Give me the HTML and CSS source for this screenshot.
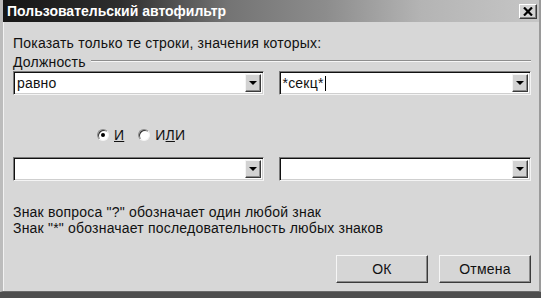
FILE: index.html
```html
<!DOCTYPE html>
<html lang="ru">
<head>
    <meta charset="UTF-8">
    <title>Пользовательский автофильтр</title>
    <link rel="stylesheet" href="styles.css">
</head>
<body>
    <div class="window">
        <div class="titlebar">
            <span class="title">Пользовательский автофильтр</span>
            <div class="close-btn">
                <svg width="10" height="9" viewBox="0 0 10 9">
                    <path d="M1 0.5 L9 8.5 M9 0.5 L1 8.5" stroke="#000" stroke-width="2.2"/>
                </svg>
            </div>
        </div>
        <div class="content">
            <div class="caption">Показать только те строки, значения которых:</div>
            <div class="group">
                <span>Должность</span>
                <div class="etched"></div>
            </div>
            <div class="combo-row">
                <div class="combo left">
                    <span class="value">равно</span>
                    <div class="drop"><i></i></div>
                </div>
                <div class="combo right">
                    <span class="value">*секц*<b class="caret"></b></span>
                    <div class="drop"><i></i></div>
                </div>
            </div>
            <div class="radios">
                <label class="radio"><span class="dot checked"></span><span><u>И</u></span></label>
                <label class="radio"><span class="dot"></span><span>И<u>Л</u>И</span></label>
            </div>
            <div class="combo-row second">
                <div class="combo left">
                    <span class="value"></span>
                    <div class="drop"><i></i></div>
                </div>
                <div class="combo right">
                    <span class="value"></span>
                    <div class="drop"><i></i></div>
                </div>
            </div>
            <div class="hints">
                <div>Знак вопроса "?" обозначает один любой знак</div>
                <div>Знак "*" обозначает последовательность любых знаков</div>
            </div>
            <div class="buttons">
                <div class="btn">ОК</div>
                <div class="btn">Отмена</div>
            </div>
        </div>
    </div>
</body>
</html>
```
FILE: styles.css
```css
* {
    margin: 0;
    padding: 0;
    box-sizing: border-box;
}

body {
    width: 541px;
    height: 298px;
    background: #4e4e4e;
    font-family: "Liberation Sans", Arial, sans-serif;
    font-size: 14px;
    letter-spacing: 0.2px;
    color: #111;
    overflow: hidden;
}

.window {
    height: 292px;
    background: #d7d7d7;
    border-left: 3px solid #bcbcbc;
    border-right: 2px solid #9a9a9a;
    border-bottom: 1px solid #6a6a6a;
    box-shadow: inset 1px 0 #f2f2f2;
}

.titlebar {
    height: 22px;
    display: flex;
    align-items: center;
    justify-content: space-between;
    padding: 0 2px 0 4px;
    background: linear-gradient(to right, #161616 0, #2e2e2e 22%, #747474 42%, #8c8c8c 60%, #b4b4b4 78%, #c6c6c6 100%);
}

.title {
    color: #fff;
    font-weight: bold;
    font-size: 14px;
    letter-spacing: 0;
}

.close-btn {
    width: 18px;
    height: 15px;
    background: #d4d4d4;
    border: 1px solid;
    border-color: #fff #3a3a3a #3a3a3a #fff;
    box-shadow: inset -1px -1px #808080;
    display: flex;
    align-items: center;
    justify-content: center;
    margin-top: 1px;
}

.content {
    padding: 13px 8px 0 10px;
}

.caption {
    line-height: 16px;
}

.group {
    display: flex;
    align-items: center;
    margin-top: 3px;
    line-height: 16px;
}

.etched {
    flex: 1;
    height: 2px;
    margin: 0 0 2px 5px;
    border-top: 1px solid #8e8e8e;
    border-bottom: 1px solid #f6f6f6;
}

.combo-row {
    display: flex;
    gap: 15px;
    margin-top: 1px;
}

.combo-row.second {
    margin-top: 14px;
}

.combo {
    height: 24px;
    background: #fff;
    border: 1px solid;
    border-color: #7a7a7a #f4f4f4 #f4f4f4 #7a7a7a;
    box-shadow: inset 1px 1px #111, inset -1px -1px #cfcfcf;
    display: flex;
    align-items: center;
    padding: 2px 2px 2px 3px;
}

.combo.left {
    width: 251px;
}

.combo.right {
    width: 253px;
}

.value {
    flex: 1;
    display: flex;
    align-items: center;
    line-height: 16px;
}

.caret {
    display: inline-block;
    width: 1px;
    height: 15px;
    background: #000;
    margin-left: 1px;
}

.drop {
    width: 16px;
    height: 18px;
    background: #d2d2d2;
    border: 1px solid;
    border-color: #f4f4f4 #3a3a3a #3a3a3a #f4f4f4;
    box-shadow: inset -1px -1px #8a8a8a;
    display: flex;
    align-items: center;
    justify-content: center;
}

.drop i {
    width: 0;
    height: 0;
    border-left: 4px solid transparent;
    border-right: 4px solid transparent;
    border-top: 4px solid #000;
}

.radios {
    display: flex;
    gap: 14px;
    margin: 32px 0 0 84px;
    line-height: 16px;
}

.radio {
    display: flex;
    align-items: center;
    gap: 5px;
}

.radio u {
    text-decoration: underline;
}

.dot {
    width: 12px;
    height: 12px;
    border-radius: 50%;
    background: #fff;
    border: 1px solid;
    border-color: #8a8a8a #f4f4f4 #f4f4f4 #8a8a8a;
    box-shadow: inset 1px 1px #333;
    display: flex;
    align-items: center;
    justify-content: center;
}

.dot.checked::after {
    content: "";
    width: 4px;
    height: 4px;
    border-radius: 50%;
    background: #000;
}

.hints {
    margin-top: 23px;
    line-height: 16px;
}

.buttons {
    display: flex;
    justify-content: flex-end;
    gap: 11px;
    margin-top: 19px;
}

.btn {
    width: 92px;
    height: 28px;
    background: #d6d6d6;
    border: 1px solid;
    border-color: #f6f6f6 #3a3a3a #3a3a3a #f6f6f6;
    box-shadow: inset -1px -1px #8a8a8a;
    display: flex;
    align-items: center;
    justify-content: center;
}
```
